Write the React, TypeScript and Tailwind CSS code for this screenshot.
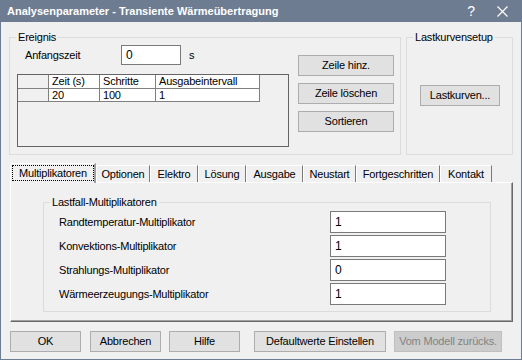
import React from 'react';

// Analysenparameter dialog (Windows classic look)

const tabs = [
  { label: 'Multiplikatoren', w: 'w-[86px]', active: true },
  { label: 'Optionen', w: 'w-[54px]' },
  { label: 'Elektro', w: 'w-[48px]' },
  { label: 'Lösung', w: 'w-[48px]' },
  { label: 'Ausgabe', w: 'w-[57px]' },
  { label: 'Neustart', w: 'w-[53px]' },
  { label: 'Fortgeschritten', w: 'w-[84px]' },
  { label: 'Kontakt', w: 'w-[52px]' }
];

const multipliers = [
  { label: 'Randtemperatur-Multiplikator', value: '1' },
  { label: 'Konvektions-Multiplikator', value: '1' },
  { label: 'Strahlungs-Multiplikator', value: '0' },
  { label: 'Wärmeerzeugungs-Multiplikator', value: '1' }
];

const Btn = ({
  children,
  className = '',
  disabled = false
}: {
  children: React.ReactNode;
  className?: string;
  disabled?: boolean;
}) => (
  <button
    className={`h-[21px] border text-[11px] leading-none ${
      disabled
        ? 'bg-[#cccccc] border-[#bfbfbf] text-[#838383]'
        : 'bg-[#e1e1e1] border-[#adadad] text-black'
    } ${className}`}
    disabled={disabled}
  >
    {children}
  </button>
);

const Field = ({ value, className = '' }: { value: string; className?: string }) => (
  <div
    className={`flex items-center bg-white border border-[#7a7a7a] pl-[4px] text-[12px] text-black ${className}`}
  >
    {value}
  </div>
);

export default function App() {
  return (
    <div className="w-[522px] h-[360px] flex flex-col bg-[#6e7c91] [font-family:'Liberation_Sans',Arial,sans-serif] text-[11px] text-black">
      {/* title bar */}
      <div className="h-[22px] flex items-center pl-[7px] text-white">
        <span className="font-bold text-[11px]">
          Analysenparameter - Transiente Wärmeübertragung
        </span>
        <span className="ml-auto text-[14px] leading-none">?</span>
        <svg className="ml-[22px] mr-[14px]" width="11" height="11" viewBox="0 0 11 11">
          <path d="M0.5 0.5 L10.5 10.5 M10.5 0.5 L0.5 10.5" stroke="white" strokeWidth="1.2" />
        </svg>
      </div>

      {/* body */}
      <div className="flex-1 flex flex-col bg-[#f0f0f0] mx-px mb-px px-[8px] pt-[9px] tracking-[-0.2px]">
        {/* top groups */}
        <div className="flex gap-[5px]">
          <fieldset className="w-[392px] h-[124px] border border-[#dcdcdc] p-0 m-0">
            <legend className="ml-[6px] px-[2px] leading-[13px]">Ereignis</legend>
            <div className="flex">
              <div className="flex flex-col">
                <div className="mt-[1px] flex items-center h-[20px]">
                  <span className="ml-[15px] w-[96px]">Anfangszeit</span>
                  <Field value="0" className="w-[60px] h-[20px]" />
                  <span className="ml-[8px]">s</span>
                </div>
                <div className="ml-[7px] mt-[9px] w-[272px] h-[73px] border border-[#646464] bg-[#f0f0f0]">
                  <div className="flex h-[14px]">
                    <div className="w-[31px] bg-[#f0f0f0] border-r border-b border-[#808080]" />
                    <div className="w-[51px] bg-white border-r border-b border-[#808080] pl-[3px] leading-[13px]">Zeit (s)</div>
                    <div className="w-[56px] bg-white border-r border-b border-[#808080] pl-[3px] leading-[13px]">Schritte</div>
                    <div className="w-[104px] bg-white border-r border-b border-[#808080] pl-[3px] leading-[13px]">Ausgabeintervall</div>
                  </div>
                  <div className="flex h-[13px]">
                    <div className="w-[31px] bg-[#f0f0f0] border-r border-b border-[#808080]" />
                    <div className="w-[51px] bg-white border-r border-b border-[#808080] pl-[3px] leading-[12px]">20</div>
                    <div className="w-[56px] bg-white border-r border-b border-[#808080] pl-[3px] leading-[12px]">100</div>
                    <div className="w-[104px] bg-white border-r border-b border-[#808080] pl-[3px] leading-[12px]">1</div>
                  </div>
                </div>
              </div>
              <div className="ml-auto mr-[6px] mt-[11px] flex flex-col gap-[7px]">
                <Btn className="w-[96px]">Zeile hinz.</Btn>
                <Btn className="w-[96px]">Zeile löschen</Btn>
                <Btn className="w-[96px]">Sortieren</Btn>
              </div>
            </div>
          </fieldset>

          <fieldset className="flex-1 h-[124px] border border-[#dcdcdc] p-0 m-0">
            <legend className="ml-[6px] px-[2px] leading-[13px]">Lastkurvensetup</legend>
            <div className="flex justify-center pl-[1px] mt-[41px]">
              <Btn className="w-[80px]">Lastkurven...</Btn>
            </div>
          </fieldset>
        </div>

        {/* tab strip */}
        <div className="mt-[8px] ml-[1px] h-[19px] flex items-end">
          {tabs.map((t) =>
            t.active ? (
              <div
                key={t.label}
                className={`${t.w} relative z-10 -mb-px h-[20px] bg-[#f0f0f0] border-l border-t border-white border-r-2 border-r-[#a0a0a0] pl-px pt-px pb-[2px] rounded-tl-[2px]`}
              >
                <div className="h-full border border-dotted border-black flex items-center justify-center">
                  {t.label}
                </div>
              </div>
            ) : (
              <div
                key={t.label}
                className={`${t.w} h-[17px] bg-[#f0f0f0] border-l border-t border-white border-r border-r-[#7a7a7a] flex items-center justify-center rounded-tl-[2px]`}
              >
                {t.label}
              </div>
            )
          )}
        </div>

        {/* tab panel */}
        <div className="ml-[1px] w-[503px] h-[140px] border-l border-t border-white border-r border-b border-r-[#696969] border-b-[#696969] shadow-[inset_-1px_-1px_0_#a0a0a0]">
          <fieldset className="ml-[32px] mt-[13px] w-[448px] h-[116px] border border-[#dcdcdc] p-0">
            <legend className="ml-[6px] px-[2px] leading-[13px]">Lastfall-Multiplikatoren</legend>
            <div className="mt-[2px] flex flex-col gap-[2px]">
              {multipliers.map((m) => (
                <div key={m.label} className="flex items-center h-[22px]">
                  <span className="ml-[15px] w-[271px]">{m.label}</span>
                  <Field value={m.value} className="w-[116px] h-[22px]" />
                </div>
              ))}
            </div>
          </fieldset>
        </div>

        {/* bottom buttons */}
        <div className="mt-[9px] flex">
          <Btn className="ml-[1px] w-[71px]">OK</Btn>
          <Btn className="ml-[9px] w-[71px]">Abbrechen</Btn>
          <Btn className="ml-[8px] w-[71px]">Hilfe</Btn>
          <Btn className="ml-[14px] w-[132px]">Defaultwerte Einstellen</Btn>
          <Btn className="ml-[8px] w-[108px]" disabled>
            Vom Modell zurücks.
          </Btn>
        </div>
      </div>
    </div>
  );
}
